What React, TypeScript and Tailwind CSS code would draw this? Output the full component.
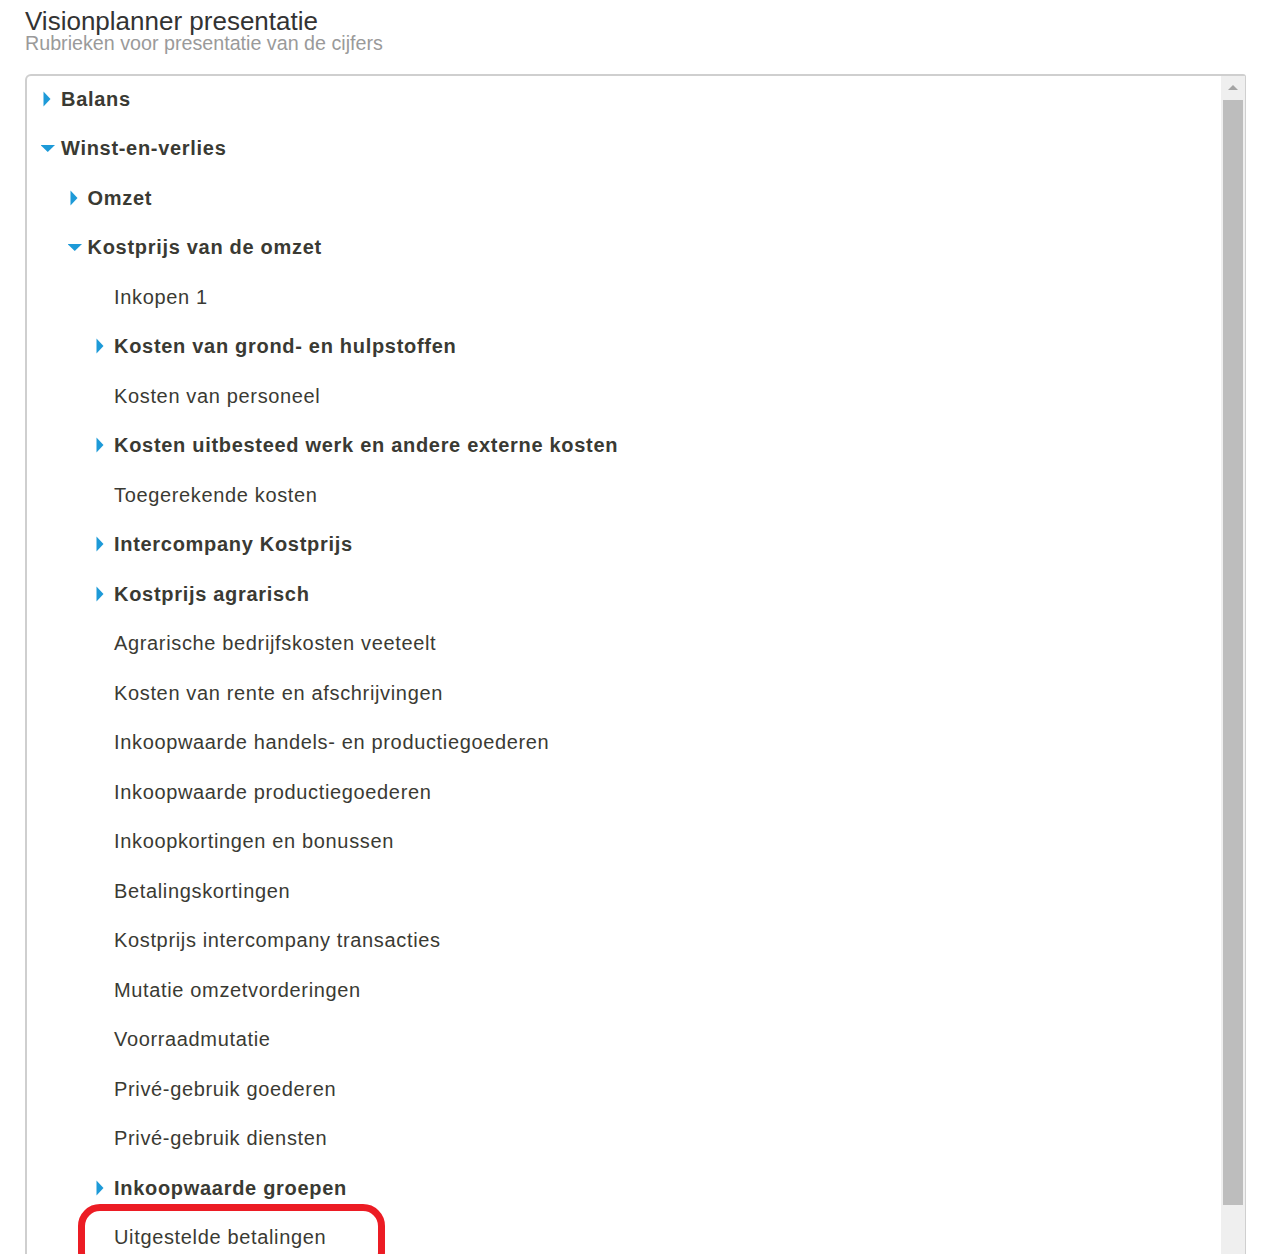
import React from 'react';

interface TreeRow {
  label: string;
  level: number;
  state?: 'open' | 'closed';
}

const rows: TreeRow[] = [
  { label: 'Balans', level: 0, state: 'closed' },
  { label: 'Winst-en-verlies', level: 0, state: 'open' },
  { label: 'Omzet', level: 1, state: 'closed' },
  { label: 'Kostprijs van de omzet', level: 1, state: 'open' },
  { label: 'Inkopen 1', level: 2 },
  { label: 'Kosten van grond- en hulpstoffen', level: 2, state: 'closed' },
  { label: 'Kosten van personeel', level: 2 },
  { label: 'Kosten uitbesteed werk en andere externe kosten', level: 2, state: 'closed' },
  { label: 'Toegerekende kosten', level: 2 },
  { label: 'Intercompany Kostprijs', level: 2, state: 'closed' },
  { label: 'Kostprijs agrarisch', level: 2, state: 'closed' },
  { label: 'Agrarische bedrijfskosten veeteelt', level: 2 },
  { label: 'Kosten van rente en afschrijvingen', level: 2 },
  { label: 'Inkoopwaarde handels- en productiegoederen', level: 2 },
  { label: 'Inkoopwaarde productiegoederen', level: 2 },
  { label: 'Inkoopkortingen en bonussen', level: 2 },
  { label: 'Betalingskortingen', level: 2 },
  { label: 'Kostprijs intercompany transacties', level: 2 },
  { label: 'Mutatie omzetvorderingen', level: 2 },
  { label: 'Voorraadmutatie', level: 2 },
  { label: 'Privé-gebruik goederen', level: 2 },
  { label: 'Privé-gebruik diensten', level: 2 },
  { label: 'Inkoopwaarde groepen', level: 2, state: 'closed' },
  { label: 'Uitgestelde betalingen', level: 2 },
];

// indent per level, first is level 0
const indents = ['pl-[14px]', 'pl-[40.5px]', 'pl-[67px]'];

function Toggle({ state }: { state?: 'open' | 'closed' }) {
  if (state === 'closed') {
    return (
      <svg width="20" height="16" viewBox="0 0 20 16" className="shrink-0">
        <path d="M2.5 0.5 L9.5 8 L2.5 15.5 Z" fill="#1d9ad8" />
      </svg>
    );
  }
  if (state === 'open') {
    return (
      <svg width="20" height="16" viewBox="0 0 20 16" className="shrink-0">
        <path d="M-0.5 5 L14 5 L6.75 12 Z" fill="#1d9ad8" />
      </svg>
    );
  }
  return <span className="w-[20px] shrink-0" />;
}

export default function App() {
  return (
    <div className="relative h-[1254px] overflow-hidden bg-white px-[25px] pt-[8px] font-['Liberation_Sans',Arial,sans-serif]">
      {/* Header */}
      <h1 className="text-[26px] leading-[26px] text-[#333333]">Visionplanner presentatie</h1>
      <p className="text-[19.7px] leading-[19px] text-[#9a9a9a]">Rubrieken voor presentatie van de cijfers</p>

      {/* Tree panel */}
      <div className="mt-[21px] flex h-[1300px] w-[1221px] rounded-tl-[6px] rounded-tr-[3px] border-l-2 border-t-2 border-r border-[#cfcfcf]">
        <div className="-mt-[2px] flex-1">
          {rows.map((row, i) => (
            <div
              key={i}
              className={`flex h-[49.5px] items-center ${indents[row.level]} ${
                row.state ? 'font-bold tracking-[0.7px]' : 'tracking-[0.65px]'
              } text-[20px] text-[#3a3a33]`}
            >
              <Toggle state={row.state} />
              <span>{row.label}</span>
            </div>
          ))}
        </div>

        {/* Scrollbar */}
        <div className="flex w-[24px] flex-col bg-[#efefef]">
          <div className="flex h-[24px] items-center justify-center">
            <svg width="12" height="8" viewBox="0 0 12 8">
              <path d="M6 1 L11 6 L1 6 Z" fill="#a4a4a4" />
            </svg>
          </div>
          <div className="mx-[2px] h-[1105px] bg-[#bdbdbd]" />
        </div>
      </div>

      {/* annotation */}
      <div className="absolute left-[78px] top-[1204px] h-[70px] w-[307px] rounded-[22px] border-[7px] border-[#ec1c24]" />
    </div>
  );
}
